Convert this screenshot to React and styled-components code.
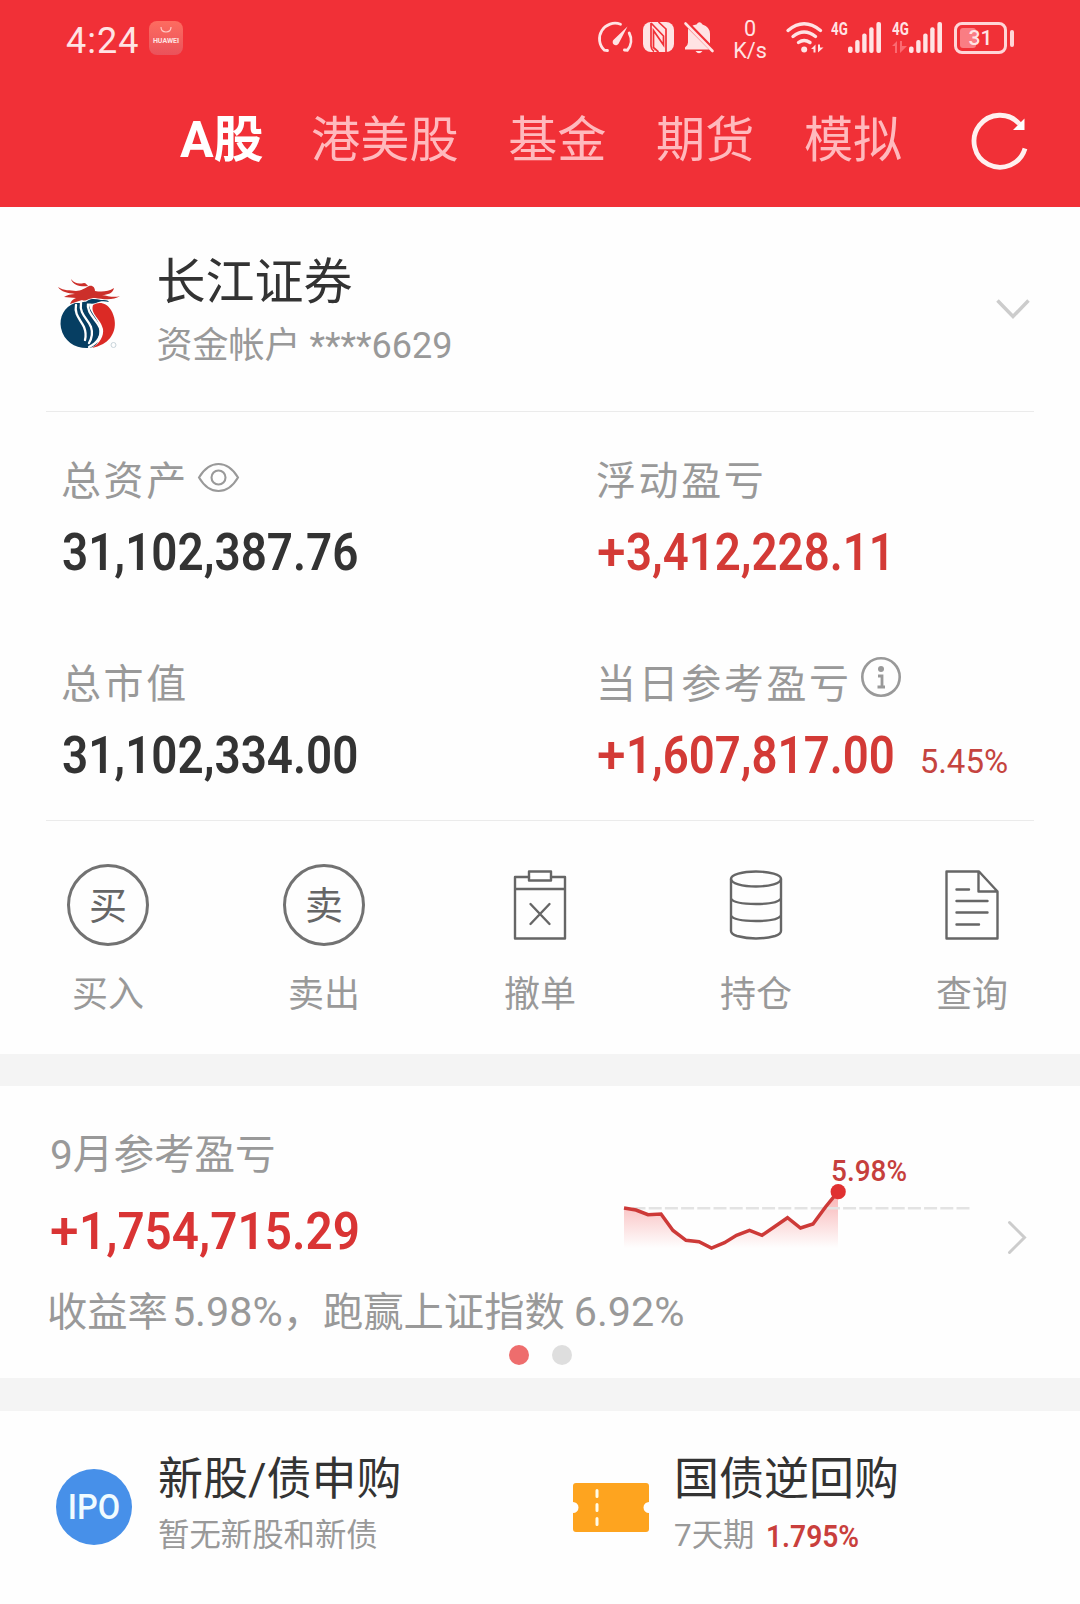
import React from 'react';
import styled, { createGlobalStyle, css } from 'styled-components';

const GlobalStyle = createGlobalStyle`
  * {
    box-sizing: border-box;
  }

  body {
    margin: 0;
    background: #fefefe;
    color: #333;
    font-family: Roboto, 'Noto Sans CJK SC', sans-serif;
  }

  svg {
    display: block;
    flex: none;
    overflow: visible;
  }
`

const Page = styled.div`
  width: 1080px;
  min-height: 1604px;
  background: #fefefe;
`

const Header = styled.header`
  height: 207px;
  background: #f13037;
  color: #ffe3e4;
`

const StatusBar = styled.div`
  display: flex;
  height: 76px;
  padding: 0 73px 0 66px;
`

const Clock = styled.span`
  width: 83px;
  font-size: 36px;
  line-height: 82px;
  letter-spacing: 1px;
`

const AppBadge = styled.span`
  width: 34px;
  height: 34px;
  margin-top: 21px;
  padding-top: 6px;
  border-radius: 8px;
  background: linear-gradient(#fd6c60, #ea525b);
  font-size: 7px;
  font-weight: 700;
  line-height: 10px;
  text-align: center;

  svg {
    margin: 0 auto 3px;
  }
`

const StatusIcons = styled.div`
  display: flex;
  align-items: flex-start;
  margin-left: auto;
  padding-top: 22px;
`

const Speed = styled.div`
  width: 36px;
  margin: -5px 18px 0 17px;
  font-size: 22.5px;
  line-height: 22px;
  text-align: center;

  div {
    height: 22px;
    transform: scaleX(.96);
  }
`

const Signal = styled.div`
  display: flex;
  margin-left: ${props => props.$left}px;
`

const Network = styled.div`
  width: 17px;
  font-size: 18px;
  font-weight: 700;
  line-height: 14px;

  span {
    display: block;
    transform: scaleX(.74);
    transform-origin: left;
  }

  svg {
    margin-top: 5px;
  }
`

const Battery = styled.div`
  position: relative;
  width: 53px;
  height: 32px;
  margin-left: 12px;
  border: 3px solid #ffd5d7;
  border-radius: 8px;
  font-size: 21px;
  font-weight: 500;
  line-height: 27px;
  text-align: center;

  &::before {
    content: '';
    position: absolute;
    left: 3px;
    top: 3px;
    width: 16px;
    height: 20px;
    border-radius: 3px;
    background: #fa7d83;
  }

  &::after {
    content: '';
    position: absolute;
    right: -10px;
    top: 5px;
    width: 4px;
    height: 17px;
    border-radius: 2px;
    background: #ffd5d7;
  }

  span {
    position: relative;
  }
`

const TabBar = styled.nav`
  display: flex;
  align-items: center;
  height: 126px;
  padding: 1px 0 0 180px;
`

const Tab = styled.a`
  margin-right: 49.5px;
  color: #ffb9bd;
  font-size: 49.2px;
  line-height: 60px;

  ${props => props.$active && css`
    margin-right: 47.500px;
    color: #fff;
    font-size: 50px;
    font-weight: 700;
  `}
`

const Refresh = styled.span`
  margin: 3px 0 0 20px;
`

const Account = styled.section`
  display: flex;
  height: 204px;
  padding: 46px 50px 0 56px;
`

const Logo = styled.div`
  width: 100.5px;
  padding-top: 25px;
`

const AccountName = styled.div`
  font-size: 49px;
  line-height: 60px;
`

const AccountNo = styled.div`
  margin-top: 8px;
  color: #999;
  font-size: 36px;
  line-height: 50px;
`

const Expand = styled.span`
  margin: 46px 0 0 auto;
`

const Divider = styled.hr`
  height: 1px;
  margin: 0 46px;
  border: 0;
  background: #ebebeb;
`

const Metrics = styled.section`
  display: grid;
  grid-template-columns: 535px 1fr;
  row-gap: 77px;
  padding: 45px 0 34px 62px;
`

const MetricLabel = styled.div`
  display: flex;
  height: 50px;
  margin: 0 0 16px -1px;
  color: #999;
  font-size: 40px;
  line-height: 50px;
  letter-spacing: 2.6px;

  svg {
    margin: ${props => props.$iconMargin};
  }
`

const Amount = styled.div`
  display: flex;
  height: 60px;
  color: ${props => props.$up ? '#d33a36' : '#333'};
  font-size: 51.5px;
  font-weight: 600;
  line-height: 60px;
`

const Sign = styled.span`
  width: 29px;
  font-weight: 500;
`

const Digits = styled.span`
  transform: scaleX(${props => props.$squeeze});
  transform-origin: left;
  white-space: nowrap;
`

const Rate = styled.span`
  margin-left: -10px;
  padding-top: 6px;
  color: #c5443f;
  font-size: 33px;
  font-weight: 400;
`

const Actions = styled.section`
  display: grid;
  grid-template-columns: repeat(5, 1fr);
  height: 233px;
  padding-top: 43px;
`

const Action = styled.div`
  display: flex;
  flex-direction: column;
  align-items: center;
  color: #999;
  font-size: 36px;
  line-height: 44px;
`

const ActionIcon = styled.div`
  display: flex;
  align-items: center;
  justify-content: center;
  height: 82px;
  margin-bottom: 27px;
`

const RoundIcon = styled.div`
  width: 82px;
  height: 82px;
  border: 3px solid #727272;
  border-radius: 50%;
  color: #666;
  font-size: 38px;
  line-height: 78px;
  text-align: center;
`

const Gap = styled.div`
  height: ${props => props.$height}px;
  background: #f4f4f4;
`

const Profit = styled.section`
  height: 292px;
  padding: 44px 54px 0 50px;
`

const ProfitRow = styled.div`
  display: flex;
  height: 131px;
`

const ProfitText = styled.div`
  width: 573px;

  ${Amount} {
    color: #d93434;
  }
`

const ProfitTitle = styled.div`
  margin-bottom: 22px;
  color: #999;
  font-size: 40.6px;
  line-height: 50px;
`

const More = styled.span`
  margin: 91px 0 0 auto;
`

const Summary = styled.div`
  height: 50px;
  margin: 26px 0 8px -3px;
  color: #999;
  font-size: 40.3px;
  line-height: 50px;
  white-space: nowrap;
`

const Percent = styled.span`
  margin-left: ${props => props.$left}px;
  font-size: 41.3px;
`

const Dots = styled.div`
  display: flex;
  justify-content: center;
  gap: 23px;
  padding-left: 5px;
`

const Dot = styled.span`
  width: 20px;
  height: 20px;
  border-radius: 50%;
  background: ${props => props.$active ? '#ee6d6d' : '#dedede'};
`

const Products = styled.section`
  display: grid;
  grid-template-columns: 516px 1fr;
  padding: 42px 0 0 56px;
`

const Product = styled.div`
  display: flex;
`

const ProductIcon = styled.div`
  width: 102px;
  padding: ${props => props.$padding};
`

const Ipo = styled.div`
  width: 76px;
  height: 76px;
  border-radius: 50%;
  background: #4790e9;
  color: #f0fbff;
  font-size: 35px;
  font-weight: 500;
  line-height: 77px;
  text-align: center;

  span {
    display: block;
    transform: scaleX(.93);
  }
`

const ProductName = styled.div`
  margin-bottom: 9px;
  font-size: 45px;
  line-height: 54px;
`

const ProductNote = styled.div`
  display: flex;
  color: #999;
  font-size: 31.4px;
  line-height: 40px;

  strong {
    margin-left: 12px;
    color: #c93f3c;
    font-size: 32px;
    font-weight: 600;
    transform: scaleX(.88);
    transform-origin: left;
  }
`

const line = { fill: 'none', stroke: '#666', strokeWidth: 2.4, strokeLinejoin: 'round', strokeLinecap: 'round' };

const Bars = () => (
  <svg width="33" height="31" fill="#ffe3e4">
    <rect x="0" y="24.5" width="4.6" height="6.5" rx="2" />
    <rect x="7.2" y="18" width="4.4" height="13" rx="2" />
    <rect x="14.2" y="11.5" width="4.4" height="19.5" rx="2" />
    <rect x="21.2" y="5.3" width="4.4" height="25.7" rx="2" />
    <rect x="28.4" y="0" width="4.6" height="31" rx="2" />
  </svg>
)

const Gauge = () => (
  <svg width="34" height="31" viewBox="0 0 34 31" fill="none" stroke="#ffe3e4" strokeWidth="2.8" strokeLinecap="round">
    <path d="M8.5 28.5 5.4 28.2A15.6 15.6 0 0 1 21.5 2.2" />
    <path d="M30.2 11a15.6 15.6 0 0 1-1.8 17.2l-3-.2" />
    <path d="M28.5 4.5 19.7 21.5a3.2 3.2 0 1 1-4.8-4Z" fill="#ffe3e4" stroke="none" />
  </svg>
)

const Nfc = () => (
  <svg width="31" height="30" viewBox="0 0 31 30">
    <rect width="31" height="30" rx="8" fill="#ffe3e4" />
    <path d="M8 1v23q0 3 3 5.5M8 1 20.5 14V23L10.5 8.5v17l5 4.5M15.5 0 23 7v23" fill="none" stroke="#f13037" strokeWidth="1.7" />
  </svg>
)

const Muted = () => (
  <svg width="31" height="32" viewBox="0 0 31 32">
    <path d="M1.5 1.5 28.5 29" stroke="#ffe3e4" strokeWidth="2.6" strokeLinecap="round" />
    <path d="M8.5 3.5 26 21.5V12q0-7-7.5-9.5-3-4.5-6 0Q10 2.8 8.5 3.5Z" fill="#ffe3e4" />
    <path d="M4 6.5 25 27.5H1v-2q3-2 3-5V6.5ZM11.5 29h7q-3.5 4.5-7 0Z" fill="#ffe3e4" />
  </svg>
)

const Wifi = () => (
  <svg width="38" height="31" viewBox="0 0 38 31" fill="none" stroke="#ffe3e4" strokeWidth="3.4" strokeLinecap="round">
    <path d="M2 8.5Q18-5 34.5 8.5M7 14.5q11-9 22.5 0M12.5 20.5q5.5-4 11.5 0" />
    <circle cx="18.2" cy="27.5" r="3" fill="#ffe3e4" stroke="none" />
    <path d="M25 27 29.5 22.5V30.5h-2V27ZM32 22.5v8L37.5 25.5H34v-3Z" fill="#ffe3e4" stroke="none" />
  </svg>
)

const CompanyLogo = () => (
  <svg width="66" height="74" viewBox="0 0 66 74">
    <path d="M19 25C8 29 3 39 5 50c3 14 15 21 28 20 6-1 10-5 9-10-1-9-12-14-15-22-2-6-1-9-1-13Z" fill="#063e62" />
    <path d="M25 25c4-2 8-1 8 0-1 8 10 16 11 25 1 7-3 12-6 14-2-9-12-15-14-24-2-6-1-11 1-15Z" fill="#063e62" />
    <path d="M37 27c6-4 14-2 18 5 8 14 3 28-8 34-4 2-7 3-11 4 8-5 12-12 11-19-2-10-13-15-10-24Z" fill="#db2a25" />
    <path d="M20 27c-2 10 5 15 8 22 2 5 2 9 1 13M25 25c-2 11 7 16 10 24 2 6 1 11-2 16M32 25c-2 10 9 17 12 25 2 9-3 15-11 19" fill="none" stroke="#fefefe" strokeWidth="2.3" strokeLinecap="round" />
    <path d="M28 27c4-8 11-6 17-5 4 0 7 0 8 2-5-1-9-1-13 1-5 2-8-1-12 2Z" fill="#063e62" />
    <path d="M2 9c6 4 12 3 18 4 5 0 9-3 13-5 4-1 6 2 6 5 6 1 13 1 19-3-1 5-6 7-12 7 6 1 12 3 18 1-7 5-18 3-25 2-7 0-9 4-13 2l-12 4c1-3 3-5 6-6l-12-1c3-2 7-3 11-3C12 15 5 14 2 9Z" fill="#cc2f2a" />
    <path d="M15 1c4 5 8 5 13 4 2 0 3 2 4 3-6 1-15 0-17-7Z" fill="#cc2f2a" />
    <circle cx="57.5" cy="67" r="2.5" fill="none" stroke="#c8d4da" />
  </svg>
)

const Eye = () => (
  <svg width="41" height="29" viewBox="0 0 41 29" fill="none" stroke="#999" strokeWidth="2.1">
    <path d="M1 14.5Q9 1 20.5 1T40 14.5Q32 28 20.5 28T1 14.5Z" />
    <circle cx="20.5" cy="14.5" r="7" />
  </svg>
)

const Info = () => (
  <svg width="40" height="40" viewBox="0 0 40 40">
    <circle cx="20" cy="20" r="18.7" fill="none" stroke="#999" strokeWidth="2.6" />
    <circle cx="20" cy="12" r="3" fill="#999" />
    <path d="M17 19h4v11M16.5 30h7.5" fill="none" stroke="#999" strokeWidth="2.8" />
  </svg>
)

const Cancel = () => (
  <svg width="54" height="70" viewBox="0 0 54 70" {...line}>
    <path d="M16 7H2v61.5h50V7H38M2 19h50M17.5 34 36.5 54M36.5 34 17.5 54" />
    <rect x="16" y="1.5" width="22" height="9" />
  </svg>
)

const Holdings = () => (
  <svg width="54" height="70" viewBox="0 0 54 70" {...line}>
    <ellipse cx="27" cy="9" rx="25" ry="7.5" />
    <path d="M2 9v52q0 3 6 5 19 5 38 0 6-2 6-5V9M2 28.5q3 5.5 25 5.5t25-5.5M2 45.5q3 5.5 25 5.5t25-5.5" />
  </svg>
)

const Query = () => (
  <svg width="54" height="70" viewBox="0 0 54 70" {...line}>
    <path d="M34 1.5H1.5v67h51V21.5ZM33.5 1.5v20h19M11.5 19.5H24M11.5 31h31M11.5 42.5h31M11.5 54.5H34" />
  </svg>
)

const points = [
  [1, 78], [13, 80], [25, 84.7], [38, 84], [50, 100.5], [63, 110.3], [76, 111.7], [88.5, 118], [101.5, 112.7],
  [113.5, 105.3], [126.5, 100.3], [139, 105.3], [151.5, 96.7], [164.5, 87.7], [177.5, 98], [190, 94], [202.5, 77], [215, 61.7],
].map(point => point.join(' ')).join(' L')

const ProfitChart = () => (
  <svg width="348" height="131" viewBox="0 0 348 131">
    <defs>
      <linearGradient id="fade" gradientUnits="userSpaceOnUse" x1="0" y1="61" x2="0" y2="118">
        <stop offset="0" stopColor="#f0383a" stopOpacity=".4" />
        <stop offset="1" stopColor="#f0383a" stopOpacity="0" />
      </linearGradient>
    </defs>
    <path d={`M${points} V118 H1 Z`} fill="url(#fade)" />
    <path d="M9.5 78.3H347" stroke="#e3e3e3" strokeWidth="2.5" strokeDasharray="13 3.2" />
    <path d={`M${points}`} fill="none" stroke="#cd3a38" strokeWidth="3.5" />
    <circle cx="215.2" cy="61.7" r="7.6" fill="#e03131" />
    <text x="208" y="51" fill="#c63f3d" fontSize="29.5" fontWeight="500" textLength="76" lengthAdjust="spacingAndGlyphs">5.98%</text>
  </svg>
)

const Ticket = () => (
  <svg width="76" height="49" viewBox="0 0 76 49">
    <path d="M3 0h70q3 0 3 3v16a5.5 5.5 0 0 0 0 11v16q0 3-3 3H3q-3 0-3-3V30a5.5 5.5 0 0 0 0-11V3q0-3 3-3Z" fill="#fea41f" />
    <path d="M24 7.5v6M24 21.5v6M24 35.5v6" stroke="#fffbe8" strokeWidth="3" strokeLinecap="round" />
  </svg>
)

const actions = [
  { label: '买入', icon: <RoundIcon>买</RoundIcon> },
  { label: '卖出', icon: <RoundIcon>卖</RoundIcon> },
  { label: '撤单', icon: <Cancel /> },
  { label: '持仓', icon: <Holdings /> },
  { label: '查询', icon: <Query /> },
]

const App = () => {
  return (
    <Page>
      <GlobalStyle />
      <Header>
        <StatusBar>
          <Clock>4:24</Clock>
          <AppBadge>
            <svg width="12" height="6" fill="none" stroke="#ffc9c6" strokeWidth="1.2"><path d="M1 0q0 5 5 5t5-5" /></svg>
            HUAWEI
          </AppBadge>
          <StatusIcons>
            <Gauge />
            <Signal $left={10}><Nfc /></Signal>
            <Signal $left={10}><Muted /></Signal>
            <Speed>
              <div>0</div>
              <div>K/s</div>
            </Speed>
            <Wifi />
            <Signal $left={7}>
              <Network><span>4G</span></Network>
              <Bars />
            </Signal>
            <Signal $left={11}>
              <Network>
                <span>4G</span>
                <svg width="15" height="12" fill="#fb6a71"><path d="M0 5 5 0v12H3V5ZM8 0v12l7-7h-5V0Z" /></svg>
              </Network>
              <Bars />
            </Signal>
            <Battery><span>31</span></Battery>
          </StatusIcons>
        </StatusBar>
        <TabBar>
          <Tab $active>A股</Tab>
          <Tab>港美股</Tab>
          <Tab>基金</Tab>
          <Tab>期货</Tab>
          <Tab>模拟</Tab>
          <Refresh>
            <svg width="56" height="57" viewBox="0 0 56 57" fill="none" stroke="#fff0ef" strokeWidth="4.8">
              <path d="M53 35.5A26 26 0 1 1 47.5 11" />
              <path d="M52.5 5.5V17H41Z" fill="#fff" stroke="none" />
            </svg>
          </Refresh>
        </TabBar>
      </Header>

      <Account>
        <Logo><CompanyLogo /></Logo>
        <div>
          <AccountName>长江证券</AccountName>
          <AccountNo>资金帐户 ****6629</AccountNo>
        </div>
        <Expand>
          <svg width="34" height="20" fill="none" stroke="#ccc" strokeWidth="3.5"><path d="M1.5 1.5 17 17.5 32.5 1.5" /></svg>
        </Expand>
      </Account>
      <Divider />
      <Metrics>
        <div>
          <MetricLabel $iconMargin="6px 0 0 9px">总资产<Eye /></MetricLabel>
          <Amount><Digits $squeeze={.89}>31,102,387.76</Digits></Amount>
        </div>
        <div>
          <MetricLabel>浮动盈亏</MetricLabel>
          <Amount $up><Sign>+</Sign><Digits $squeeze={.885}>3,412,228.11</Digits></Amount>
        </div>
        <div>
          <MetricLabel>总市值</MetricLabel>
          <Amount><Digits $squeeze={.89}>31,102,334.00</Digits></Amount>
        </div>
        <div>
          <MetricLabel $iconMargin="-3px 0 0 9px">当日参考盈亏<Info /></MetricLabel>
          <Amount $up><Sign>+</Sign><Digits $squeeze={.885}>1,607,817.00</Digits><Rate>5.45%</Rate></Amount>
        </div>
      </Metrics>
      <Divider />
      <Actions>
        {actions.map(action => (
          <Action key={action.label}>
            <ActionIcon>{action.icon}</ActionIcon>
            {action.label}
          </Action>
        ))}
      </Actions>
      <Gap $height={32} />

      <Profit>
        <ProfitRow>
          <ProfitText>
            <ProfitTitle>9月参考盈亏</ProfitTitle>
            <Amount $up><Sign>+</Sign><Digits $squeeze={.925}>1,754,715.29</Digits></Amount>
          </ProfitText>
          <ProfitChart />
          <More>
            <svg width="18" height="33" fill="none" stroke="#ccc" strokeWidth="3" strokeLinecap="round"><path d="M1.5 1.5 16.5 16.5 1.5 31.5" /></svg>
          </More>
        </ProfitRow>
        <Summary>
          收益率<Percent $left={4}>5.98%</Percent>，跑赢上证指数<Percent $left={9}>6.92%</Percent>
        </Summary>
        <Dots>
          <Dot $active />
          <Dot />
        </Dots>
      </Profit>
      <Gap $height={33} />

      <Products>
        <Product>
          <ProductIcon $padding="16px 0 0"><Ipo><span>IPO</span></Ipo></ProductIcon>
          <div>
            <ProductName>新股/债申购</ProductName>
            <ProductNote>暂无新股和新债</ProductNote>
          </div>
        </Product>
        <Product>
          <ProductIcon $padding="30px 0 0 1px"><Ticket /></ProductIcon>
          <div>
            <ProductName>国债逆回购</ProductName>
            <ProductNote>7天期<strong>1.795%</strong></ProductNote>
          </div>
        </Product>
      </Products>
    </Page>
  );
}

export default App;
